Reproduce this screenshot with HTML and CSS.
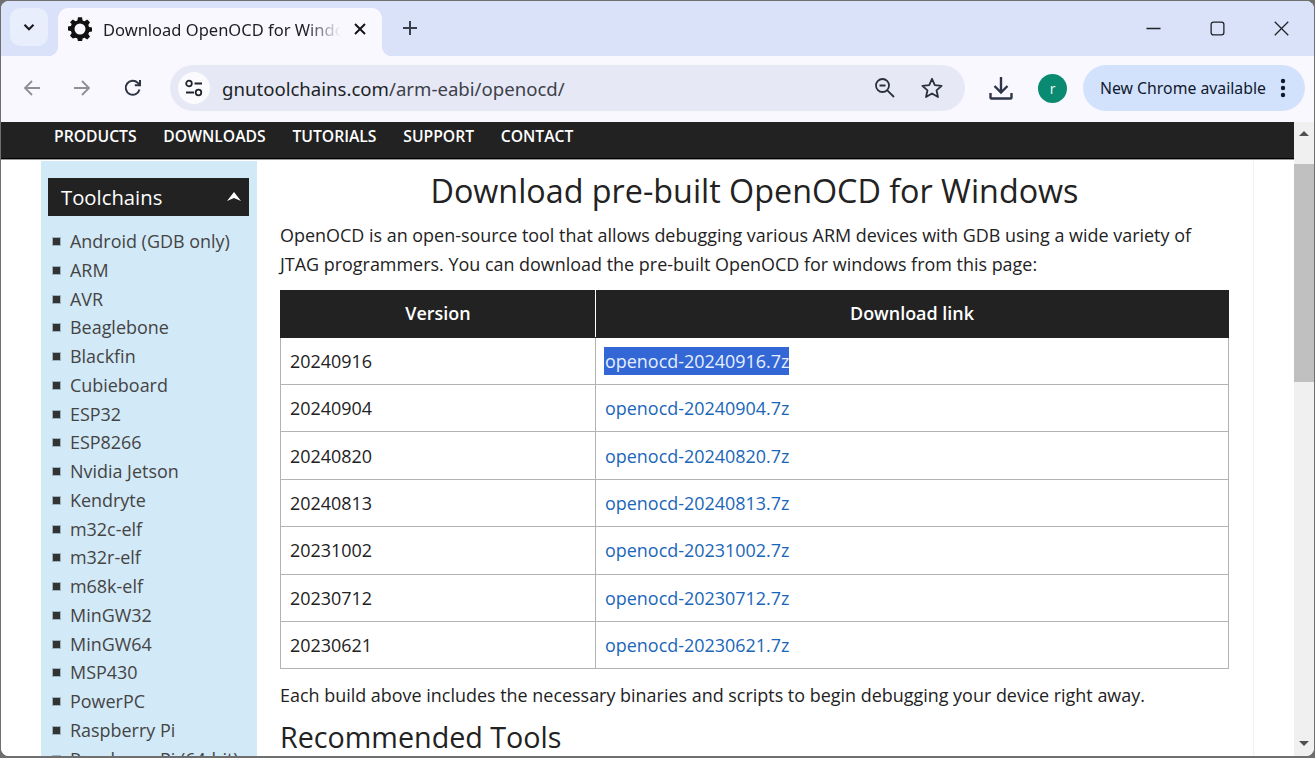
FILE: index.html
```html
<!DOCTYPE html>
<html lang="en">
<head>
<meta charset="utf-8">
<title>Download OpenOCD for Windows</title>
<link rel="stylesheet" href="styles.css">
</head>
<body>
<div class="window">
  <header class="tabstrip">
    <button class="tabsearch"><svg width="14" height="14" viewBox="0 0 14 14"><path d="M2.500 4.800 7 9.300l4.500-4.500" fill="none" stroke="#1b1c22" stroke-width="2.200"/></svg></button>
    <div class="tab">
      <svg class="favicon" width="24" height="24" viewBox="0 0 24 24"><path fill="#111" fill-rule="evenodd" d="M10 .8h4l.6 3.100 1.900.8L19.200 3 22 5.800l-1.700 2.700.8 1.900 3.100.6v4l-3.100.6-.8 1.900 1.700 2.700-2.800 2.800-2.700-1.700-1.900.8-.6 3.100h-4l-.6-3.100-1.900-.8L4.800 22 2 19.200l1.700-2.700-.8-1.900-3.100-.6v-4l3.100-.6.800-1.900L2 5.800 4.800 3l2.700 1.700 1.900-.8zM12 7a5.500 5.500 0 1 0 0 11 5.500 5.500 0 0 0 0-11z" transform="translate(0 -.5)"/></svg>
      <span class="tabtitle">Download OpenOCD for Windows</span>
      <svg class="tabclose" width="14" height="14" viewBox="0 0 14 14"><path d="M2 2l10 10M12 2 2 12" stroke="#15161a" stroke-width="2" fill="none"/></svg>
    </div>
    <svg class="newtab" width="16" height="16" viewBox="0 0 16 16"><path d="M8 1v14M1 8h14" stroke="#3a3e48" stroke-width="2" fill="none"/></svg>
    <div class="wincontrols">
      <svg width="15" height="15" viewBox="0 0 16 16"><path d="M.5 8h15" stroke="#20222a" stroke-width="1.400"/></svg>
      <svg width="15" height="15" viewBox="0 0 16 16"><rect x="1.200" y="1.200" width="13.600" height="13.600" rx="2.500" fill="none" stroke="#20222a" stroke-width="1.400"/></svg>
      <svg width="15" height="15" viewBox="0 0 16 16"><path d="M.8.8l14.400 14.400M15.200.8.8 15.200" stroke="#20222a" stroke-width="1.400" fill="none"/></svg>
    </div>
  </header>

  <div class="toolbar">
    <div class="navbuttons">
      <svg width="20" height="20" viewBox="0 0 20 20"><path d="M18 10H3M10 3l-7 7 7 7" fill="none" stroke="#8f9094" stroke-width="1.800"/></svg>
      <svg width="20" height="20" viewBox="0 0 20 20"><path d="M2 10h15M10 3l7 7-7 7" fill="none" stroke="#8f9094" stroke-width="1.800"/></svg>
      <svg width="20" height="20" viewBox="0 0 20 20"><path d="M16.500 11.500A7 7 0 1 1 14.800 4.900L16.800 7M17 2v5.200h-5.200" fill="none" stroke="#2f3542" stroke-width="2"/></svg>
    </div>
    <div class="omnibox">
      <span class="siteinfo"><svg width="20" height="18" viewBox="0 0 20 18"><circle cx="5" cy="4.500" r="2.800" fill="none" stroke="#20232c" stroke-width="1.800"/><path d="M10.500 4.500H18M2 13.500h8" stroke="#20232c" stroke-width="1.800"/><circle cx="14.500" cy="13.500" r="2.800" fill="none" stroke="#20232c" stroke-width="1.800"/></svg></span>
      <span class="url">gnutoolchains.com<span class="urlpath">/arm-eabi/openocd/</span></span>
      <svg class="omniicon zoomicon" width="22" height="22" viewBox="0 0 22 22"><circle cx="8.500" cy="8.500" r="6.500" fill="none" stroke="#2b2f3a" stroke-width="1.800"/><path d="M5.500 8.500h6M13.300 13.300 20 20" stroke="#2b2f3a" stroke-width="1.800"/></svg>
      <svg class="omniicon" width="24" height="24" viewBox="0 0 24 24"><path d="M12 2.800l2.800 6.300 6.800.7-5.100 4.500 1.500 6.700-6-3.500-6 3.500 1.500-6.700-5.100-4.500 6.800-.7z" fill="none" stroke="#2b2f3a" stroke-width="1.800" stroke-linejoin="round"/></svg>
    </div>
    <svg class="download" width="24" height="24" viewBox="0 0 24 24"><path d="M12 1v15M5.500 10l6.500 6.500 6.500-6.500M1.500 17v4.500a1 1 0 0 0 1 1h19a1 1 0 0 0 1-1V17" fill="none" stroke="#2e3547" stroke-width="2.400"/></svg>
    <span class="avatar">r</span>
    <div class="update">
      <span>New Chrome available</span>
      <svg width="6" height="20" viewBox="0 0 6 20"><circle cx="3" cy="3" r="2.200"/><circle cx="3" cy="10" r="2.200"/><circle cx="3" cy="17" r="2.200"/></svg>
    </div>
  </div>

  <div class="viewport">
    <div class="page">
      <nav class="sitenav">
        <a>PRODUCTS</a><a>DOWNLOADS</a><a>TUTORIALS</a><a>SUPPORT</a><a>CONTACT</a>
      </nav>
      <div class="container">
        <aside class="sidebar">
          <h3 class="sidehead">Toolchains<svg width="14" height="10" viewBox="0 0 14 10"><path d="M7 0l7 9-7-3-7 3z" fill="#fff"/></svg></h3>
          <ul class="sidelist">
            <li>Android (GDB only)</li>
            <li>ARM</li>
            <li>AVR</li>
            <li>Beaglebone</li>
            <li>Blackfin</li>
            <li>Cubieboard</li>
            <li>ESP32</li>
            <li>ESP8266</li>
            <li>Nvidia Jetson</li>
            <li>Kendryte</li>
            <li>m32c-elf</li>
            <li>m32r-elf</li>
            <li>m68k-elf</li>
            <li>MinGW32</li>
            <li>MinGW64</li>
            <li>MSP430</li>
            <li>PowerPC</li>
            <li>Raspberry Pi</li>
            <li>Raspberry Pi (64-bit)</li>
          </ul>
        </aside>
        <main class="content">
          <h1>Download pre-built OpenOCD for Windows</h1>
          <p class="intro">OpenOCD is an open-source tool that allows debugging various ARM devices with GDB using a wide variety of JTAG programmers. You can download the pre-built OpenOCD for windows from this page:</p>
          <table class="downloads">
            <thead><tr><th class="colver">Version</th><th>Download link</th></tr></thead>
            <tbody>
              <tr><td>20240916</td><td><a class="selected">openocd-20240916.7z</a></td></tr>
              <tr><td>20240904</td><td><a>openocd-20240904.7z</a></td></tr>
              <tr><td>20240820</td><td><a>openocd-20240820.7z</a></td></tr>
              <tr><td>20240813</td><td><a>openocd-20240813.7z</a></td></tr>
              <tr><td>20231002</td><td><a>openocd-20231002.7z</a></td></tr>
              <tr><td>20230712</td><td><a>openocd-20230712.7z</a></td></tr>
              <tr><td>20230621</td><td><a>openocd-20230621.7z</a></td></tr>
            </tbody>
          </table>
          <p class="after">Each build above includes the necessary binaries and scripts to begin debugging your device right away.</p>
          <h2>Recommended Tools</h2>
        </main>
      </div>
    </div>
    <div class="scrollbar">
      <span class="arrow up"></span>
      <span class="thumb"></span>
      <span class="arrow down"></span>
    </div>
  </div>
</div>
</body>
</html>
```
FILE: styles.css
```css
* { box-sizing: border-box; }
html, body { margin: 0; height: 100%; overflow: hidden; background: #6f6f70; }
body { padding: 1px 1px 2px 1px; }
.window {
  height: 755px;
  display: flex;
  flex-direction: column;
  border-radius: 8px;
  overflow: hidden;
  background: #fff;
  font-family: "Open Sans", sans-serif;
}
.tabstrip {
  height: 55px;
  flex: none;
  background: #d9e2f8;
  display: flex;
  align-items: flex-start;
  padding: 7px 0 0 9px;
}
.tabsearch {
  width: 38px;
  height: 38px;
  padding: 0;
  border: 0;
  border-radius: 10px;
  background: #e8eefc;
  display: flex;
  align-items: center;
  justify-content: center;
}
.tab {
  position: relative;
  margin-left: 10px;
  width: 324px;
  height: 48px;
  background: #f9f8ff;
  border-radius: 10px 10px 0 0;
  display: flex;
  align-items: center;
  padding: 0 15px 6px 10px;
}
.tab::before, .tab::after {
  content: "";
  position: absolute;
  bottom: 0;
  width: 10px;
  height: 10px;
}
.tab::before { left: -10px; background: radial-gradient(circle at 0 0, transparent 10px, #f9f8ff 10.500px); }
.tab::after { right: -10px; background: radial-gradient(circle at 100% 0, transparent 10px, #f9f8ff 10.500px); }
.favicon { flex: none; }
.tabtitle {
  margin-left: 11px;
  flex: 1;
  font-family: "Noto Sans", sans-serif;
  font-size: 16.500px;
  color: #1d1e24;
  white-space: nowrap;
  overflow: hidden;
  -webkit-mask-image: linear-gradient(to right, #000 85%, transparent 100%);
  mask-image: linear-gradient(to right, #000 85%, transparent 100%);
}
.tabclose { flex: none; margin-left: 12px; }
.newtab { margin: 12px 0 0 20px; flex: none; }
.wincontrols {
  margin-left: auto;
  padding: 13px 25px 0 0;
  display: flex;
  gap: 49px;
}
.toolbar {
  height: 66px;
  flex: none;
  background: #f9f8ff;
  display: flex;
  align-items: center;
  padding: 0 0 2px 21px;
}
.navbuttons { display: flex; gap: 30px; }
.navbuttons svg:last-child { margin-left: 1px; }
.omnibox {
  margin-left: 27px;
  width: 795px;
  height: 46px;
  border-radius: 23px;
  background: #e6e9f5;
  display: flex;
  align-items: center;
  padding: 0 21px 0 8px;
}
.siteinfo {
  width: 32px;
  height: 32px;
  border-radius: 50%;
  background: #fbfbfe;
  display: flex;
  align-items: center;
  justify-content: center;
  flex: none;
}
.url {
  margin-left: 12px;
  flex: 1;
  font-family: "Noto Sans", sans-serif;
  font-size: 18.600px;
  color: #1d1f27;
}
.urlpath { color: #3d404a; }
.omniicon { flex: none; margin-left: 23px; }
.zoomicon { margin-right: 1px; }
.download { margin-left: 24px; flex: none; }
.avatar {
  margin-left: 25px;
  width: 29px;
  height: 29px;
  border-radius: 50%;
  background: #0b8a72;
  color: #eefaf6;
  font-size: 14px;
  display: flex;
  align-items: center;
  justify-content: center;
  flex: none;
}
.update {
  margin-left: 16px;
  width: 222px;
  height: 46px;
  border-radius: 23px;
  background: #d3e2fc;
  display: flex;
  align-items: center;
  justify-content: space-between;
  padding: 0 19px 0 17px;
  font-family: "Noto Sans", sans-serif;
  font-size: 15.800px;
  color: #10182c;
  flex: none;
}
.update svg { fill: #10182c; }
.viewport { flex: 1; min-height: 0; display: flex; }
.page { flex: 1; min-width: 0; overflow: hidden; background: #fff; }
.sitenav {
  height: 37px;
  margin-bottom: 2px;
  background: #222;
  border-bottom: 1px solid #000;
  box-shadow: 0 1px 0 #999;
  display: flex;
  align-items: center;
  gap: 26.750px;
  padding: 0 0 8px 53px;
}
.sitenav a {
  color: #fff;
  font-size: 15.700px;
  font-weight: 600;
}
.container {
  margin-left: 40px;
  width: 1213px;
  display: flex;
  border-right: 1px solid #f1f1f1;
  height: 600px;
}
.sidebar {
  width: 216px;
  flex: none;
  background: #d2e9f7;
  padding: 17px 8px 0 7px;
}
.sidehead {
  margin: 0;
  height: 38px;
  background: #222;
  color: #fff;
  font-size: 20.300px;
  font-weight: 400;
  display: flex;
  align-items: center;
  justify-content: space-between;
  padding: 0 8px 0 13px;
}
.sidelist {
  list-style: none;
  margin: 11px 0 0;
  padding: 0;
}
.sidelist li {
  position: relative;
  padding-left: 22px;
  font-size: 17.950px;
  line-height: 28.750px;
  color: #444;
  white-space: nowrap;
}
.sidelist li::before {
  content: "";
  position: absolute;
  left: 5px;
  top: 11px;
  width: 7px;
  height: 7px;
  background: #333;
  box-shadow: 0 0 0 1px #9db3c0;
}
.content {
  flex: 1;
  padding: 0 24px 0 23px;
  color: #222;
  font-size: 17.950px;
}
h1 {
  margin: 9px 0 0;
  text-align: center;
  font-size: 32.300px;
  font-weight: 400;
  line-height: 40px;
}
.intro {
  margin: 11px 0 0;
  line-height: 28.800px;
}
.downloads {
  margin-top: 11px;
  width: 949px;
  border-collapse: collapse;
  table-layout: fixed;
}
.downloads th {
  background: #222;
  color: #fff;
  height: 47px;
  padding: 0 0 2px;
  font-weight: 600;
  border: 1px solid #222;
  border-right-color: #fff;
}
.downloads th:last-child { border-right-color: #222; }
.colver { width: 315px; }
.downloads td {
  height: 47.400px;
  padding: 0 9px;
  border: 1px solid #b3b3b3;
}
.downloads a { color: #1a66b8; }
.downloads a.selected { background: #3367d6; color: #e6efff; padding: 2px 0 2px 1px; margin-left: -1px; }
.after { margin: 12px 0 0; line-height: 28.800px; }
h2 {
  margin: 7px 0 0;
  font-size: 28.700px;
  font-weight: 400;
  line-height: 40px;
}
.scrollbar {
  width: 20px;
  flex: none;
  background: #f0f0f0;
  display: flex;
  flex-direction: column;
  align-items: center;
}
.arrow {
  width: 0;
  height: 0;
  border-left: 5px solid transparent;
  border-right: 5px solid transparent;
  flex: none;
}
.arrow.up { margin-top: 9px; border-bottom: 5px solid #505050; }
.thumb { margin-top: 28px; width: 20px; height: 218px; background: #c0c0c0; flex: none; }
.arrow.down { margin-top: auto; margin-bottom: 10px; border-top: 5px solid #505050; }
```
